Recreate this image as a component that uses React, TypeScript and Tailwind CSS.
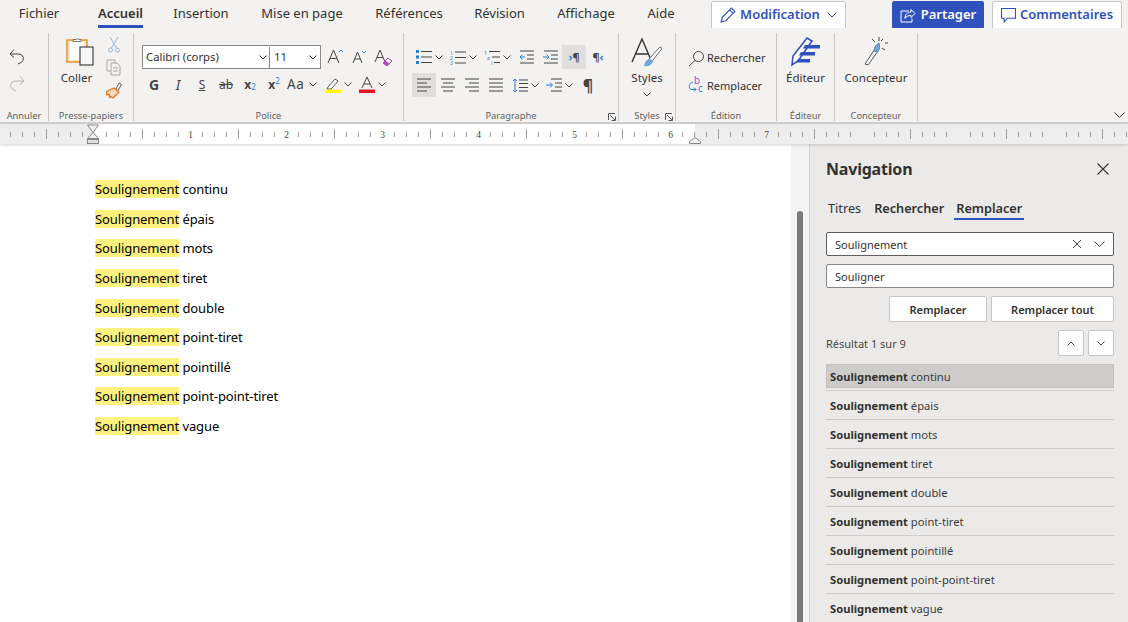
import React from "react";

const ui = "font-['Open_Sans','Noto_Sans',sans-serif]";

function Chev({ up = false, className = "" }: { up?: boolean; className?: string }) {
  return (
    <svg width="8" height="5" viewBox="0 0 8 5" className={className} fill="none" stroke="#444" strokeWidth="1">
      <path d={up ? "M.5 4.500 4 1l3.500 3.500" : "M.5.500 4 4 7.500.500"} />
    </svg>
  );
}

function Lines({ kind }: { kind: "left" | "center" | "right" | "just" }) {
  const r: Record<string, string> = {
    left: "M1 1h14M1 5h10M1 9h14M1 13h10",
    center: "M1 1h14M3 5h10M1 9h14M3 13h10",
    right: "M1 1h14M5 5h10M1 9h14M5 13h10",
    just: "M1 1h14M1 5h14M1 9h14M1 13h14",
  };
  return (
    <svg width="16" height="14" viewBox="0 0 16 14" fill="none" stroke="#444" strokeWidth="1">
      <path d={r[kind]} />
    </svg>
  );
}

function Launcher() {
  return (
    <svg width="8" height="8" viewBox="0 0 8 8" fill="none" stroke="#555" strokeWidth="1">
      <path d="M.5 7V.5H7M2 2l5 5M3.500 7.500h4v-4" />
    </svg>
  );
}

function Group({ label, width, children, launcher }: { label: string; width: string; children: React.ReactNode; launcher?: boolean }) {
  return (
    <div className={`flex flex-col border-r-[1px] border-[#c8c6c4] h-[88px] shrink-0 ${width}`}>
      <div className="flex-1 min-h-0">{children}</div>
      <div className="relative h-[14px] text-center text-[9.300px] leading-[18px] text-[#605e5c] whitespace-nowrap">
        {label}
        {launcher && <span className="absolute right-[2px] top-[6px] flex"><Launcher /></span>}
      </div>
    </div>
  );
}

const I = "flex items-center justify-center";

function FontGroup() {
  return (
    <div className="pl-[8px] pt-[12px]">
      <div className="flex items-center">
        <div className="flex h-[24px] w-[179px] border border-[#8a8886] bg-white pt-[1px] text-[11.300px] text-[#323130]">
          <div className="flex w-[127px] items-center justify-between border-r border-[#8a8886] pl-[3px] pr-[2px]">
            <span>Calibri (corps)</span>
            <Chev />
          </div>
          <div className="flex flex-1 items-center justify-between pl-[4px] pr-[3px]">
            <span>11</span>
            <Chev />
          </div>
        </div>
        <div className="ml-[6px] flex items-center gap-[7px] text-[#444]">
          <svg width="18" height="18" viewBox="0 0 18 18" fill="none" stroke="#444"><path d="M1 15 6.500 2 12 15M3 10.500h7" /><path d="M12 4l2-2 2 2" stroke="#2b88d8" /></svg>
          <svg width="15" height="18" viewBox="0 0 15 18" fill="none" stroke="#444"><path d="M1 15 5.500 4 10 15M2.800 11h5.400" /><path d="M10 3l2 2 2-2" stroke="#2b88d8" /></svg>
          <svg width="19" height="18" viewBox="0 0 19 18" fill="none"><path d="M1 14 6 2l5 12M3 9.500h6" stroke="#444" /><path d="M9 15l5-5 4 3-5 5z" stroke="#b146c2" /><path d="M9 15l2.500-2.500 3.500 3L13 18z" fill="#b146c2" /></svg>
        </div>
      </div>
      <div className="mt-[5px] flex items-center text-[#444]">
        <span className={`${I} w-[24px] text-[14px] font-bold`}>G</span>
        <span className={`${I} w-[24px] font-['Liberation_Serif',serif] text-[14px] italic`}>I</span>
        <span className={`${I} w-[24px] text-[12px] underline`}>S</span>
        <span className={`${I} w-[24px] text-[12px] line-through`}>ab</span>
        <span className={`${I} w-[24px] text-[12px] font-bold`}>x<sub className="text-[8px] font-normal text-[#2b88d8]">2</sub></span>
        <span className={`${I} w-[24px] text-[12px] font-bold`}>x<sup className="text-[8px] font-normal text-[#2b88d8]">2</sup></span>
        <span className="ml-[1px] flex w-[38px] items-center gap-[5px] text-[13.500px] tracking-[0.5px]">Aa<Chev /></span>
        <span className="flex w-[34px] items-center gap-[3px]">
          <svg width="16" height="17" viewBox="0 0 16 17" fill="none" stroke="#555"><path d="m3 11 7-8 3 2-7 8-4 0z" fill="#fff" /><path d="M0 13.500h16v3.500H0z" fill="#ffff00" stroke="none" /></svg>
          <Chev />
        </span>
        <span className="flex items-center gap-[3px]">
          <svg width="16" height="17" viewBox="0 0 16 17" fill="none" stroke="#444"><path d="M3 12 8 1l5 11M5 8h6" /><path d="M0 13.500h16v3.500H0z" fill="#e81123" stroke="none" /></svg>
          <Chev />
        </span>
      </div>
    </div>
  );
}

function ParaGroup() {
  return (
    <div className="pl-[8px] pt-[12px]">
      <div className="flex items-center">
        <span className={`${I} h-[24px] w-[34px] gap-[3px]`}>
          <svg width="16" height="14" viewBox="0 0 16 14"><path d="M0 0h3v3H0zM0 5.500h3v3H0zM0 11h3v3H0z" fill="#2b7cd3" /><path d="M5 1.500h11M5 7h11M5 12.500h11" stroke="#444" /></svg>
          <Chev />
        </span>
        <span className={`${I} h-[24px] w-[34px] gap-[3px]`}>
          <svg width="16" height="15" viewBox="0 0 16 15"><text x="0" y="5" fontSize="5" fill="#2b7cd3">1</text><text x="0" y="10" fontSize="5" fill="#2b7cd3">2</text><text x="0" y="15" fontSize="5" fill="#2b7cd3">3</text><path d="M5 2h11M5 7.500h11M5 13h11" stroke="#444" /></svg>
          <Chev />
        </span>
        <span className={`${I} h-[24px] w-[34px] gap-[3px]`}>
          <svg width="16" height="15" viewBox="0 0 16 15"><text x="0" y="5" fontSize="5" fill="#2b7cd3">1</text><text x="3" y="10" fontSize="5" fill="#2b7cd3">a</text><text x="7" y="15" fontSize="5" fill="#2b7cd3">i</text><path d="M5 1.500h11M8 7h8M10 12.500h6" stroke="#444" /></svg>
          <Chev />
        </span>
        <span className={`${I} h-[24px] w-[24px]`}>
          <svg width="15" height="14" viewBox="0 0 15 14" fill="none"><path d="M1 1h14M8 5h7M8 9h7M1 13h14" stroke="#444" /><path d="M6 7H1m2.500-2.500L1 7l2.500 2.500" stroke="#2b7cd3" /></svg>
        </span>
        <span className={`${I} h-[24px] w-[24px]`}>
          <svg width="15" height="14" viewBox="0 0 15 14" fill="none"><path d="M1 1h14M8 5h7M8 9h7M1 13h14" stroke="#444" /><path d="M0 7h5M3.500 4.500 6 7 3.500 9.500" stroke="#2b7cd3" /></svg>
        </span>
        <span className={`${I} h-[24px] w-[24px] bg-[#e1dfdd] text-[11px] font-bold text-[#444]`}>
          <span className="text-[#2b7cd3]">›</span>¶
        </span>
        <span className={`${I} h-[24px] w-[24px] text-[11px] font-bold text-[#444]`}>
          ¶<span className="text-[#2b7cd3]">‹</span>
        </span>
      </div>
      <div className="mt-[4px] flex items-center">
        <span className={`${I} h-[24px] w-[24px] bg-[#e1dfdd]`}><Lines kind="left" /></span>
        <span className={`${I} h-[24px] w-[24px]`}><Lines kind="center" /></span>
        <span className={`${I} h-[24px] w-[24px]`}><Lines kind="right" /></span>
        <span className={`${I} h-[24px] w-[24px]`}><Lines kind="just" /></span>
        <span className={`${I} h-[24px] w-[34px] gap-[3px]`}>
          <svg width="16" height="15" viewBox="0 0 16 15" fill="none"><path d="M3 1v13M1 3l2-2 2 2M1 12l2 2 2-2" stroke="#2b7cd3" /><path d="M7 2h9M7 5.500h9M7 9.500h9M7 13h9" stroke="#444" /></svg>
          <Chev />
        </span>
        <span className={`${I} h-[24px] w-[34px] gap-[3px]`}>
          <svg width="16" height="14" viewBox="0 0 16 14" fill="none"><path d="M5 1h11M9 5h7M9 9h7M5 13h11" stroke="#444" /><path d="M0 7h6M4 4.500 6.500 7 4 9.500" stroke="#2b7cd3" /></svg>
          <Chev />
        </span>
        <span className={`${I} h-[24px] w-[24px] text-[16px] font-bold text-[#444]`}>¶</span>
      </div>
    </div>
  );
}

function Ribbon() {
  return (
    <div className="relative flex h-[96px] border-b-2 border-[#d2d0ce] bg-[#f3f2f1] pt-[5px] text-[#323130]">
      <Group label="Annuler" width="w-[49px]">
        <div className="flex flex-col items-start gap-[10px] pl-[9px] pt-[15px]">
          <svg width="16" height="17" viewBox="0 0 16 17" fill="none" stroke="#444" strokeWidth="1"><path d="M1 6h9a4.500 4.500 0 0 1 2 8.500L9 16M5 1.500 1 6l4 3.500" /></svg>
          <svg width="16" height="17" viewBox="0 0 16 17" fill="none" stroke="#b5b3b1" strokeWidth="1"><path d="M15 6H6a4.500 4.500 0 0 0-2 8.500L7 16M11 1.500 15 6l-4 3.500" /></svg>
        </div>
      </Group>
      <Group label="Presse-papiers" width="w-[85px]">
        <div className="flex pl-[13px] pt-[3px]">
          <div className="flex w-[36px] flex-col items-center">
            <svg width="28" height="31" viewBox="0 0 28 31">
              <rect x="1" y="4" width="20" height="22" fill="#fde7c5" stroke="#e8912d" strokeWidth="1.500" />
              <rect x="4" y="6" width="14" height="18" fill="#fff" />
              <path d="M7 5.500V3.500h3a2 2 0 0 1 3 0h2v2z" fill="#fff" stroke="#777" />
              <rect x="14" y="11" width="13" height="18" fill="#f7f7f7" stroke="#444" strokeWidth="1.200" />
            </svg>
            <span className="ml-[-7px] mt-[4px] text-[11.500px] leading-[14px]">Coller</span>
          </div>
          <div className="ml-[8px] flex flex-col items-center gap-[6px]">
            <svg width="14" height="17" viewBox="0 0 14 17" fill="none" stroke="#9db7d3"><path d="M3 1l6.500 11M11 1 4.500 12" /><circle cx="3.500" cy="14" r="2" /><circle cx="10.500" cy="14" r="2" /></svg>
            <svg width="16" height="17" viewBox="0 0 16 17" fill="none" stroke="#a9a7a5"><path d="M1 1h8v11H1z" /><path d="M5 4h6l3 3v9H5z" fill="#f3f2f1" /><path d="M7 9h5M7 12h5" /></svg>
            <svg width="16" height="17" viewBox="0 0 16 17" fill="none"><path d="M10 7l3-6 2.500 1.500-3.500 6z" fill="#fff" stroke="#555" /><path d="M0.500 9.500 8 6l5 4-6 6-2-1.500-1 1-1-3-2.500 0z" fill="#fbd9b5" stroke="#e0761a" strokeWidth="1.300" /></svg>
          </div>
        </div>
      </Group>
      <Group label="Police" width="w-[270px]"><FontGroup /></Group>
      <Group label="Paragraphe" width="w-[215px]" launcher><ParaGroup /></Group>
      <Group label="Styles" width="w-[57px]" launcher>
        <div className="flex flex-col items-center pt-[5px]">
          <svg width="32" height="30" viewBox="0 0 32 30" fill="none">
            <path d="M1 24 11 1l9 21M5 16h13" stroke="#333" strokeWidth="1.400" />
            <path d="M17 22 29 9l2 1.500-11 14z" fill="#fff" stroke="#666" />
            <path d="M13 28c1-5 3-7 6-7l3 2c-1 4-4 6-9 5z" fill="#6ea8dc" />
          </svg>
          <span className="mt-[3px] text-[11.500px] leading-[14px]">Styles</span>
          <span className="mt-[7px] flex"><Chev /></span>
        </div>
      </Group>
      <Group label="Édition" width="w-[101px]">
        <div className="pl-[12px] pt-[16px] text-[11px]">
          <div className="flex h-[18px] items-center gap-[2px]">
            <svg width="17" height="17" viewBox="0 0 17 17" fill="none" stroke="#444"><circle cx="10.500" cy="6.500" r="5" /><path d="m7 10.500L1 16" /></svg>
            <span>Rechercher</span>
          </div>
          <div className="mt-[10px] flex h-[18px] items-center gap-[2px]">
            <svg width="17" height="26" viewBox="0 -4 17 26" fill="none">
              <text x="6" y="7" fontSize="10" fill="#b146c2">b</text>
              <text x="10" y="15" fontSize="10" fill="#2b7cd3">c</text>
              <path d="M5 5C1 6 0 11 3 12.500h5M6 10.500l2 2-2 2" stroke="#2b7cd3" />
            </svg>
            <span>Remplacer</span>
          </div>
        </div>
      </Group>
      <Group label="Éditeur" width="w-[58px]">
        <div className="flex flex-col items-center pt-[3px]">
          <svg width="32" height="31" viewBox="0 0 32 31" fill="none">
            <path d="M2 29 3 20 17 2l5 3L8 25z" fill="#fff" stroke="#2f51bd" strokeWidth="1.600" />
            <path d="M15 9h15v3.500H13zM11 16h14v3.500H9zM8 23h12v3.500H6z" fill="#2f51bd" />
          </svg>
          <span className="mt-[4px] text-[11.500px] leading-[14px]">Éditeur</span>
        </div>
      </Group>
      <Group label="Concepteur" width="w-[83px]">
        <div className="flex flex-col items-center pt-[3px]">
          <svg width="26" height="31" viewBox="0 0 26 31" fill="none">
            <path d="M2 28 12 13l3 2-10 14z" fill="#fff" stroke="#555" />
            <path d="M11 15c0-4 3-7 5-8 1 3 1 7-2 9z" fill="#6ea8dc" stroke="#4b86c3" />
            <path d="M16 1v4M22 7h3M9 3l3 3M20 3l-2 2M19 12l3 2" stroke="#444" />
          </svg>
          <span className="mt-[4px] text-[11.500px] leading-[14px]">Concepteur</span>
        </div>
      </Group>
      <span className="absolute right-[3px] bottom-[3px] flex">
        <svg width="11" height="7" viewBox="0 0 11 7" fill="none" stroke="#333"><path d="m.5.500 5 5 5-5" /></svg>
      </span>
    </div>
  );
}

function Ruler() {
  const ticks: React.ReactNode[] = [];
  for (let i = -7; i <= 86; i++) {
    const x = 94 + i * 12;
    if (i % 8 === 0) continue;
    const long = i % 4 === 0;
    ticks.push(
      <path key={i} d={`M${x + 0.5} ${long ? 5 : 8}V${long ? 15 : 13}`} stroke="#a19f9d" strokeWidth="1" />
    );
  }
  const nums = [1, 2, 3, 4, 5, 6, 7];
  return (
    <div className="relative z-10 flex h-[20px] shrink-0 bg-[#ededed] shadow-[0_1px_3px_rgba(0,0,0,0.18)]">
      <div className="w-[93px] shrink-0" />
      <div className="w-[602px] shrink-0 bg-white" />
      <svg className="absolute left-0 top-0" width="1128" height="20" viewBox="0 0 1128 20">
        {ticks}
        {nums.map((n) => (
          <text key={n} x={94.500 + n * 96} y="14" fontSize="9.500" textAnchor="middle" fill="#444" fontFamily="'Liberation Serif', serif">{n}</text>
        ))}
        <path d="M87.500 1h11l-5.500 7.500 5.500 6v3h-11v-3l5.500-6z" fill="#f3f2f1" stroke="#8a8886" />
        <path d="M87.500 14.500h11" stroke="#8a8886" />
        <rect x="87.500" y="15.500" width="11" height="4" fill="#e1dfdd" stroke="#8a8886" />
        <path d="M689.500 19.500v-2l5.500-4 5.500 4v2z" fill="#f3f2f1" stroke="#8a8886" />
      </svg>
    </div>
  );
}

const lines = ["continu", "épais", "mots", "tiret", "double", "point-tiret", "pointillé", "point-point-tiret", "vague"];

function Doc() {
  return (
    <div className="flex-1 min-w-0 bg-white pl-[95px] pt-[36px] overflow-hidden">
      {lines.map((t) => (
        <div key={t} className="h-[29.650px] leading-[18px] text-[13px] tracking-[-0.1px] text-black font-['Lato','Noto_Sans',sans-serif] whitespace-nowrap">
          <span className="inline-block bg-[#fdf280]">Soulignement</span> {t}
        </div>
      ))}
    </div>
  );
}

function Gutter() {
  return (
    <div className="w-[18px] shrink-0 bg-[#f3f3f3] pt-[67px] pl-[6px] overflow-hidden">
      <div className="h-[500px] w-[6px] rounded-[3px] bg-[#7a7a7a]" />
    </div>
  );
}

function SmallBtn({ up }: { up?: boolean }) {
  return (
    <button className={`${I} h-[26px] w-[26px] rounded-[2px] border border-[#c8c6c4] bg-white`}>
      <Chev up={up} />
    </button>
  );
}

function Nav() {
  return (
    <div className="w-[319px] shrink-0 border-l border-[#d2d0ce] bg-[#ebeae9] pl-[16px] pr-[14px] pt-[13px] overflow-hidden text-[#323130]">
      <div className="flex h-[24px] items-center justify-between pr-[5px]">
        <span className="text-[16px] font-bold tracking-[-0.2px]">Navigation</span>
        <svg width="12" height="12" viewBox="0 0 12 12" stroke="#333" strokeWidth="1.100"><path d="m.5.500 11 11M11.500.500l-11 11" /></svg>
      </div>
      <div className="mt-[17px] flex h-[34px] items-start text-[12.700px] font-semibold">
        <span className="ml-[2px] pt-[1px] font-normal">Titres</span>
        <span className="ml-[13px] pt-[1px]">Rechercher</span>
        <span className="ml-[10px] h-[22px] border-b-[2px] border-[#2f51bd] px-[2px] pt-[1px]">Remplacer</span>
      </div>
      <div className="flex h-[24px] items-center justify-between rounded-[2px] border border-[#605e5c] bg-white pl-[8px] pr-[8px] text-[11px]">
        <span className="pt-[2px]">Soulignement</span>
        <span className="flex items-center gap-[12px]">
          <svg width="10" height="10" viewBox="0 0 10 10" stroke="#444"><path d="m1 1 8 8M9 1 1 9" /></svg>
          <svg width="11" height="7" viewBox="0 0 11 7" fill="none" stroke="#444"><path d="m.5.500 5 5 5-5" /></svg>
        </span>
      </div>
      <div className="mt-[8px] flex h-[24px] items-center rounded-[2px] border border-[#8a8886] bg-white pl-[8px] pt-[2px] text-[11px]">Souligner</div>
      <div className="mt-[8px] flex justify-end gap-[4px] text-[11px] font-semibold">
        <button className="h-[26px] w-[98px] rounded-[2px] border border-[#c8c6c4] bg-white pt-[2px]">Remplacer</button>
        <button className="h-[26px] w-[123px] rounded-[2px] border border-[#c8c6c4] bg-white pt-[2px]">Remplacer tout</button>
      </div>
      <div className="mt-[8px] flex items-center justify-between">
        <span className="pt-[2px] text-[11px] text-[#484644]">Résultat 1 sur 9</span>
        <span className="flex gap-[4px]"><SmallBtn up /><SmallBtn /></span>
      </div>
      <div className="mt-[6px]">
        {lines.map((t, i) => (
          <div key={t} className="h-[29px] border-b border-[#cfcdcb] pt-[2px]">
            <div className={`flex h-[24px] w-full items-center pt-[2px] text-[11.200px] ${i === 0 ? "border border-[#c2c1c0] bg-[#cdcccb] pl-[3px]" : "pl-[4px]"}`}>
              <span className="font-bold">Soulignement</span>
              <span className="ml-[3px] text-[#3b3a39]">{t}</span>
            </div>
          </div>
        ))}
      </div>
    </div>
  );
}

export default function App() {
  const tabs = [
    { t: "Fichier", w: "w-[78px]" },
    { t: "Accueil", w: "w-[85px]", a: true },
    { t: "Insertion", w: "w-[76px]" },
    { t: "Mise en page", w: "w-[126px]" },
    { t: "Références", w: "w-[88px]" },
    { t: "Révision", w: "w-[93px]" },
    { t: "Affichage", w: "w-[80px]" },
    { t: "Aide", w: "w-[70px]" },
  ];
  return (
    <div className={`flex h-[622px] w-[1128px] flex-col overflow-hidden bg-[#f3f2f1] ${ui}`}>
      <div className="flex h-[28px] shrink-0 items-start bg-[#f3f2f1]">
        <div className="flex h-[28px] text-[13px] text-[#323130]">
          {tabs.map((x) => (
            <div key={x.t} className={`${x.w} flex justify-center shrink-0`}>
              <span className={`h-[28px] pt-[4px] ${x.a ? "border-b-[3px] border-[#2f51bd] font-semibold" : ""}`}>{x.t}</span>
            </div>
          ))}
        </div>
        <div className="ml-[15px] mt-[1px] flex gap-[8px]">
          <button className="mr-[38px] flex h-[28px] w-[135px] items-center justify-center gap-[4px] rounded-[2px] border border-[#c8c6c4] bg-white text-[13px] font-semibold text-[#2f51bd]">
            <svg width="16" height="16" viewBox="0 0 14 14" fill="none" stroke="#2f51bd"><path d="M1 13l1-4L10 1l3 3-8 8zM8.500 2.500l3 3" /></svg>
            Modification
            <svg width="10" height="6" viewBox="0 0 10 6" fill="none" stroke="#2f51bd" className="ml-[3px]"><path d="m.5.500 4.500 4.500 4.500-4.500" /></svg>
          </button>
          <button className="flex h-[28px] w-[92px] items-center justify-center gap-[5px] rounded-[2px] bg-[#2f51bd] text-[13px] font-semibold text-white">
            <svg width="16" height="15" viewBox="0 0 16 14" fill="none" stroke="#fff"><path d="M11 1l4 4-4 4V7C8 7 6 8 5 10c0-4 2-6 6-6.500zM9 2.500H1v11h11V10" /></svg>
            Partager
          </button>
          <button className="flex h-[28px] w-[130px] items-center justify-center gap-[4px] rounded-[2px] border border-[#c8c6c4] bg-white text-[13px] font-semibold text-[#2f51bd]">
            <svg width="15" height="15" viewBox="0 0 14 14" fill="none" stroke="#2f51bd"><path d="M.5.500h13v9H6L3 13V9.500H.5z" /></svg>
            Commentaires
          </button>
        </div>
      </div>
      <Ribbon />
      <Ruler />
      <div className="flex min-h-0 flex-1">
        <Doc />
        <Gutter />
        <Nav />
      </div>
    </div>
  );
}
